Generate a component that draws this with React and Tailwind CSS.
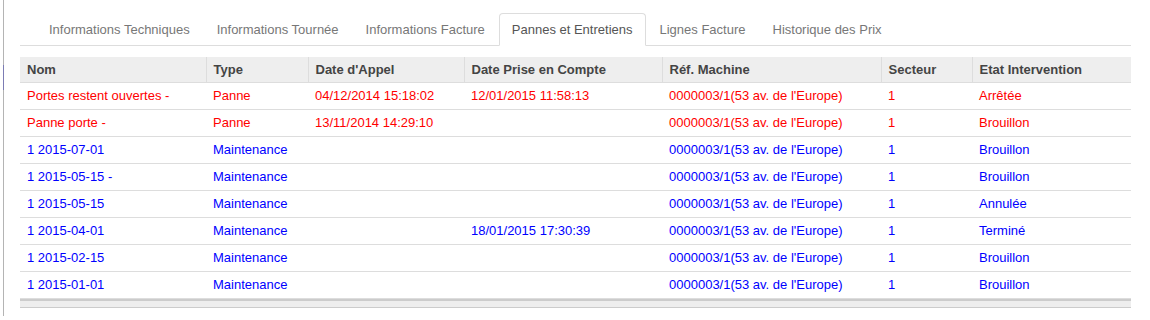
import React from "react";

const tabs = [
  "Informations Techniques",
  "Informations Tournée",
  "Informations Facture",
  "Pannes et Entretiens",
  "Lignes Facture",
  "Historique des Prix",
];

const cols = [
  { label: "Nom", w: 186 },
  { label: "Type", w: 102 },
  { label: "Date d'Appel", w: 156 },
  { label: "Date Prise en Compte", w: 198 },
  { label: "Réf. Machine", w: 219 },
  { label: "Secteur", w: 91 },
  { label: "Etat Intervention", w: 159 },
];

const rows = [
  { red: true, c: ["Portes restent ouvertes -", "Panne", "04/12/2014 15:18:02", "12/01/2015 11:58:13", "0000003/1(53 av. de l'Europe)", "1", "Arrêtée"] },
  { red: true, c: ["Panne porte -", "Panne", "13/11/2014 14:29:10", "", "0000003/1(53 av. de l'Europe)", "1", "Brouillon"] },
  { red: false, c: ["1 2015-07-01", "Maintenance", "", "", "0000003/1(53 av. de l'Europe)", "1", "Brouillon"] },
  { red: false, c: ["1 2015-05-15 -", "Maintenance", "", "", "0000003/1(53 av. de l'Europe)", "1", "Brouillon"] },
  { red: false, c: ["1 2015-05-15", "Maintenance", "", "", "0000003/1(53 av. de l'Europe)", "1", "Annulée"] },
  { red: false, c: ["1 2015-04-01", "Maintenance", "", "18/01/2015 17:30:39", "0000003/1(53 av. de l'Europe)", "1", "Terminé"] },
  { red: false, c: ["1 2015-02-15", "Maintenance", "", "", "0000003/1(53 av. de l'Europe)", "1", "Brouillon"] },
  { red: false, c: ["1 2015-01-01", "Maintenance", "", "", "0000003/1(53 av. de l'Europe)", "1", "Brouillon"] },
];

export default function App() {
  return (
    <div
      className="w-[1150px] h-[320px] bg-white flex overflow-hidden"
      style={{ fontFamily: '"Liberation Sans", Arial, sans-serif' }}
    >
      <div className="w-[3px] shrink-0" />
      <div className="w-[1px] shrink-0 h-[316px] bg-[#b4b4b4] flex flex-col">
        <div className="h-[65px]" />
        <div className="h-[25px] bg-[#7c7cb4]" />
      </div>
      <div className="w-[16px] shrink-0" />
      <div className="w-[1111px] shrink-0 flex flex-col">
        <div className="h-[13px]" />
        <div className="flex border-b border-[#dddddd] pl-[16px] h-[33px]">
          {tabs.map((t, i) => {
            const active = i === 3;
            return (
              <div
                key={t}
                className={
                  "px-[12px] mr-[1px] h-[33px] flex items-center text-[13px] whitespace-nowrap rounded-t-[4px] border " +
                  (active
                    ? "border-[#dddddd] border-b-white bg-white text-[#555555]"
                    : "border-transparent text-[#777777]")
                }
              >
                {t}
              </div>
            );
          })}
        </div>
        <div className="h-[11px]" />
        <table className="border-collapse table-fixed w-[1111px] text-[13px]">
          <colgroup>
            {cols.map((c) => (
              <col key={c.label} style={{ width: c.w }} />
            ))}
          </colgroup>
          <thead>
            <tr className="bg-[#eeeeee] h-[25px]">
              {cols.map((c, i) => (
                <th
                  key={c.label}
                  className={
                    "text-left font-bold text-[#444444] px-[7px] py-0 whitespace-nowrap border-b border-[#dddddd] " +
                    (i < cols.length - 1 ? "border-r border-r-[#dddddd]" : "")
                  }
                >
                  {c.label}
                </th>
              ))}
            </tr>
          </thead>
          <tbody>
            {rows.map((r, ri) => (
              <tr key={ri} className="h-[27px] border-b border-[#dddddd]">
                {r.c.map((v, ci) => (
                  <td
                    key={ci}
                    className={
                      "px-[7px] py-0 whitespace-nowrap " +
                      (r.red ? "text-[#ff0000]" : "text-[#0000ff]")
                    }
                  >
                    {v}
                  </td>
                ))}
              </tr>
            ))}
          </tbody>
        </table>
        <div className="h-[9px] bg-[#eeeeee] border-t-2 border-[#cccccc] border-b border-b-[#cccccc]" />
      </div>
    </div>
  );
}
